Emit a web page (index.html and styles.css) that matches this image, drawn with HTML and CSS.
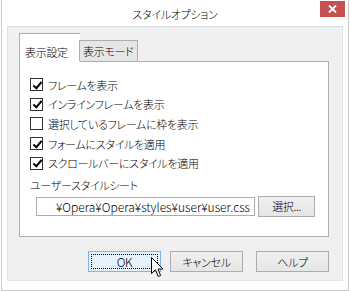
FILE: index.html
```html
<!DOCTYPE html>
<html lang="ja">
  <head>
    <meta charset="UTF-8" />
    <title>スタイルオプション</title>
    <link rel="stylesheet" href="styles.css">
  </head>
  <body>
    <div class="window">
      <div class="titlebar">
        <span></span>
        <span class="title">スタイルオプション</span>
        <button class="close-btn">
          <svg width="9" height="8" viewBox="0 0 9 8">
            <path d="M1 0.5 L8 7.5 M8 0.5 L1 7.5" stroke="#fff" stroke-width="1.8" />
          </svg>
        </button>
      </div>

      <div class="client">
        <div class="tabs">
          <div class="tab active">表示設定</div>
          <div class="tab">表示モード</div>
        </div>

        <div class="panel">
          <label class="check-row"><span class="box checked"></span>フレームを表示</label>
          <label class="check-row"><span class="box checked"></span>インラインフレームを表示</label>
          <label class="check-row"><span class="box"></span>選択しているフレームに枠を表示</label>
          <label class="check-row"><span class="box checked"></span>フォームにスタイルを適用</label>
          <label class="check-row"><span class="box checked"></span>スクロールバーにスタイルを適用</label>

          <p class="field-label">ユーザースタイルシート</p>
          <div class="file-row">
            <div class="textbox"><span>¥Opera¥Opera¥styles¥user¥user.css</span></div>
            <button class="btn select-btn">選択...</button>
          </div>
        </div>

        <div class="actions">
          <button class="btn ok-btn"><span class="focus">OK</span></button>
          <button class="btn cancel-btn">キャンセル</button>
          <button class="btn help-btn">ヘルプ</button>
          <svg class="cursor" width="13" height="21" viewBox="0 0 13 21">
            <path d="M0.5 0.5 L0.5 16.5 L4.5 12.8 L7.2 19.5 L9.6 18.5 L7 12 L12 12 Z"
              fill="#fff" stroke="#000" stroke-width="1" stroke-linejoin="miter" />
          </svg>
        </div>
      </div>
    </div>
  </body>
</html>
```

FILE: styles.css
```css
* {
  box-sizing: border-box;
}
body {
  margin: 0;
  width: 350px;
  height: 292px;
  background: #fff;
  font-family: "Noto Sans CJK JP", "Noto Sans", sans-serif;
  font-size: 11px;
  font-weight: 300;
  font-feature-settings: "palt";
  letter-spacing: -0.3px;
  color: #000;
  overflow: hidden;
}
.window {
  width: 348px;
  height: 291px;
  margin-left: 1px;
  border: 1px solid #c9c9c9;
  border-top: none;
  background: #fff;
}
.titlebar {
  height: 26px;
  display: grid;
  grid-template-columns: 1fr auto 1fr;
}
.title {
  padding-top: 6px;
  line-height: 16px;
}
.close-btn {
  justify-self: end;
  align-self: start;
  width: 25px;
  height: 16px;
  margin: 1px 3px 0 0;
  padding: 0;
  border: none;
  background: #c75050;
  display: flex;
  align-items: center;
  justify-content: center;
}
.client {
  margin: 0 5px;
  height: 255px;
  background: #f0f0f0;
  border: 1px solid #e3e3e3;
  border-top-color: #dadada;
  padding: 6px 13px 0 11px;
}
.tabs {
  display: flex;
  align-items: flex-end;
  height: 28px;
  position: relative;
  z-index: 1;
}
.tab {
  height: 21px;
  padding: 1px 3px 0 3px;
  line-height: 18px;
  border: 1px solid #adadad;
  border-bottom: none;
  background: #e6e6e6;
  margin-left: -1px;
}
.tab.active {
  height: 29px;
  width: 61px;
  margin-left: 0;
  padding: 9px 0 0 5px;
  background: #fff;
  margin-bottom: -1px;
  border-right: none;
}
.panel {
  height: 176px;
  background: #fff;
  border: 1px solid #adadad;
  padding: 13px 10px 0 10px;
}
.check-row {
  display: flex;
  align-items: center;
  height: 19.6px;
  gap: 5px;
  line-height: 16px;
}
.box {
  width: 13px;
  height: 13px;
  border: 1px solid #333;
  background: #fff;
  position: relative;
  flex: none;
}
.box.checked::after {
  content: "";
  position: absolute;
  left: 3.5px;
  top: 0.5px;
  width: 3px;
  height: 7px;
  border: solid #000;
  border-width: 0 2px 2px 0;
  transform: rotate(40deg);
}
.field-label {
  margin: 5px 0 0 0;
  line-height: 14px;
}
.file-row {
  display: flex;
  align-items: center;
  margin: 4px 0 0 6px;
  gap: 3px;
}
.textbox {
  width: 219px;
  height: 19px;
  border: 1px solid #abadb3;
  background: #fff;
  display: flex;
  justify-content: flex-end;
  overflow: hidden;
  padding-right: 4px;
  line-height: 17px;
  white-space: nowrap;
  font-size: 12px;
  letter-spacing: 0;
}
.btn {
  font-family: inherit;
  font-size: 11px;
  font-weight: 300;
  font-feature-settings: "palt";
  letter-spacing: -0.3px;
  color: #000;
  background: linear-gradient(#f0f0f0, #e5e5e5);
  border: 1px solid #acacac;
  padding: 0;
  line-height: 18px;
}
.select-btn {
  width: 57px;
  height: 21px;
}
.actions {
  display: flex;
  justify-content: flex-end;
  margin-top: 14px;
  position: relative;
}
.actions .btn {
  width: 73px;
  height: 21px;
}
.ok-btn {
  background: #e5f1fb;
  border-color: #7eb4ea;
  padding: 2px;
}
.focus {
  display: block;
  height: 100%;
  border: 1px dotted #000;
  line-height: 14px;
  font-size: 12px;
}
.cancel-btn {
  margin-left: 9px;
}
.help-btn {
  margin-left: 13px;
}
.cursor {
  position: absolute;
  left: 132px;
  top: 6px;
}
```
